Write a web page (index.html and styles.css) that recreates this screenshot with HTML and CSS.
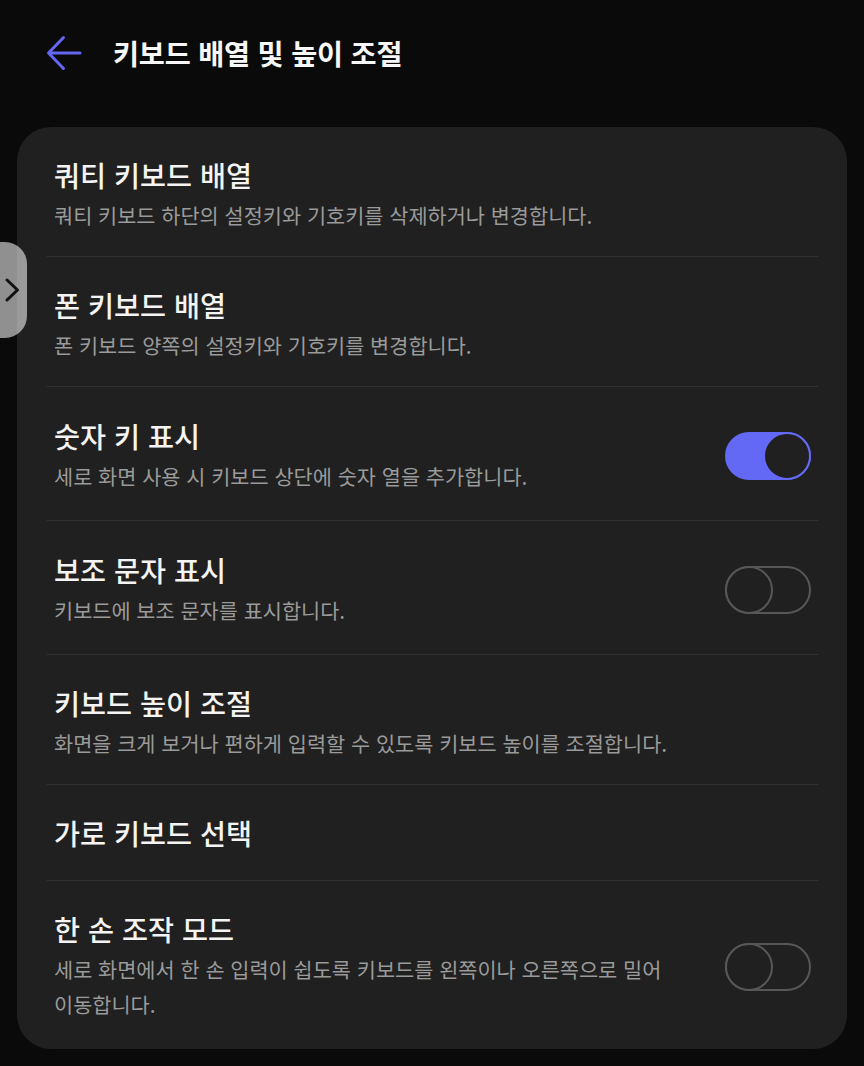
FILE: index.html
```html
<!DOCTYPE html>
<html lang="ko">
<head>
<meta charset="utf-8">
<title>키보드 배열 및 높이 조절</title>
<link rel="stylesheet" href="styles.css">
</head>
<body>
<header class="appbar">
  <svg class="back" width="36" height="36" viewBox="0 0 36 36" aria-hidden="true">
    <path d="M34 18 H3 M17.5 2.5 L2.5 18 L17.5 33.5" fill="none" stroke="#6467f2" stroke-width="3" stroke-linecap="round" stroke-linejoin="round"/>
  </svg>
  <h1 class="appbar-title">키보드 배열 및 높이 조절</h1>
</header>

<main class="card">
  <div class="row">
    <div class="text">
      <div class="title">쿼티 키보드 배열</div>
      <div class="sub">쿼티 키보드 하단의 설정키와 기호키를 삭제하거나 변경합니다.</div>
    </div>
  </div>
  <div class="row">
    <div class="text">
      <div class="title">폰 키보드 배열</div>
      <div class="sub">폰 키보드 양쪽의 설정키와 기호키를 변경합니다.</div>
    </div>
  </div>
  <div class="row toggle">
    <div class="text">
      <div class="title">숫자 키 표시</div>
      <div class="sub">세로 화면 사용 시 키보드 상단에 숫자 열을 추가합니다.</div>
    </div>
    <div class="switch on"><span class="knob"></span></div>
  </div>
  <div class="row toggle">
    <div class="text">
      <div class="title">보조 문자 표시</div>
      <div class="sub">키보드에 보조 문자를 표시합니다.</div>
    </div>
    <div class="switch"><span class="knob"></span></div>
  </div>
  <div class="row">
    <div class="text">
      <div class="title">키보드 높이 조절</div>
      <div class="sub">화면을 크게 보거나 편하게 입력할 수 있도록 키보드 높이를 조절합니다.</div>
    </div>
  </div>
  <div class="row single">
    <div class="text">
      <div class="title">가로 키보드 선택</div>
    </div>
  </div>
  <div class="row last">
    <div class="text narrow">
      <div class="title">한 손 조작 모드</div>
      <div class="sub">세로 화면에서 한 손 입력이 쉽도록 키보드를 왼쪽이나 오른쪽으로 밀어 이동합니다.</div>
    </div>
    <div class="switch"><span class="knob"></span></div>
  </div>
</main>

<div class="side-tab">
  <svg width="27" height="96" viewBox="0 0 27 96" aria-hidden="true">
    <path d="M7 38 L17.5 48 L7 58" fill="none" stroke="#111" stroke-width="3" stroke-linecap="round" stroke-linejoin="round"/>
  </svg>
</div>
</body>
</html>
```

FILE: styles.css
```css
* { box-sizing: border-box; }

html, body {
  margin: 0;
  padding: 0;
  background: #0a0a0a;
}

body {
  width: 864px;
  min-height: 1066px;
  font-family: "Noto Sans CJK KR", "Noto Sans", sans-serif;
  color: #f4f4f4;
  position: relative;
  overflow: hidden;
}

.appbar {
  height: 106px;
  display: flex;
  align-items: center;
  padding-left: 46px;
}

.back {
  display: block;
  flex: none;
}

.appbar-title {
  margin: 0 0 0 31px;
  font-size: 28.3px;
  font-weight: 700;
  line-height: 36px;
  color: #f7f7f7;
  letter-spacing: -0.2px;
}

.card {
  margin: 21px 17px 0;
  background: #202020;
  border-radius: 34px;
  padding: 0 29px 0 30px;
}

.row {
  display: flex;
  align-items: center;
  padding: 30px 7px 23px;
  border-top: 1px solid #323232;
}

.row:first-child {
  border-top: none;
}

.row.toggle {
  padding-top: 31px;
  padding-bottom: 26px;
}

.row.single {
  padding-bottom: 29px;
}

.row.last {
  padding-bottom: 27px;
}

.text {
  flex: 1;
  min-width: 0;
}

.text.narrow {
  margin-right: 24px;
  word-break: keep-all;
}

.title {
  font-size: 28.3px;
  line-height: 36px;
  font-weight: 500;
  color: #f4f4f4;
}

.sub {
  margin-top: 5px;
  font-size: 20.8px;
  line-height: 35px;
  font-weight: 400;
  color: #9a9a9a;
}

.switch {
  flex: none;
  width: 86px;
  height: 48px;
  border-radius: 24px;
  border: 2px solid #575757;
  position: relative;
}

.switch .knob {
  position: absolute;
  left: -2px;
  top: -2px;
  width: 48px;
  height: 48px;
  border-radius: 50%;
  border: 2px solid #575757;
  background: #202020;
}

.switch.on {
  background: #6469f5;
  border-color: #6469f5;
}

.switch.on .knob {
  left: auto;
  right: -2px;
  border-color: #6469f5;
}

.side-tab {
  position: absolute;
  left: 0;
  top: 242px;
  width: 27px;
  height: 96px;
  border-radius: 0 22px 22px 0;
  background: rgba(255, 255, 255, 0.55);
}

.side-tab svg {
  display: block;
}
```
